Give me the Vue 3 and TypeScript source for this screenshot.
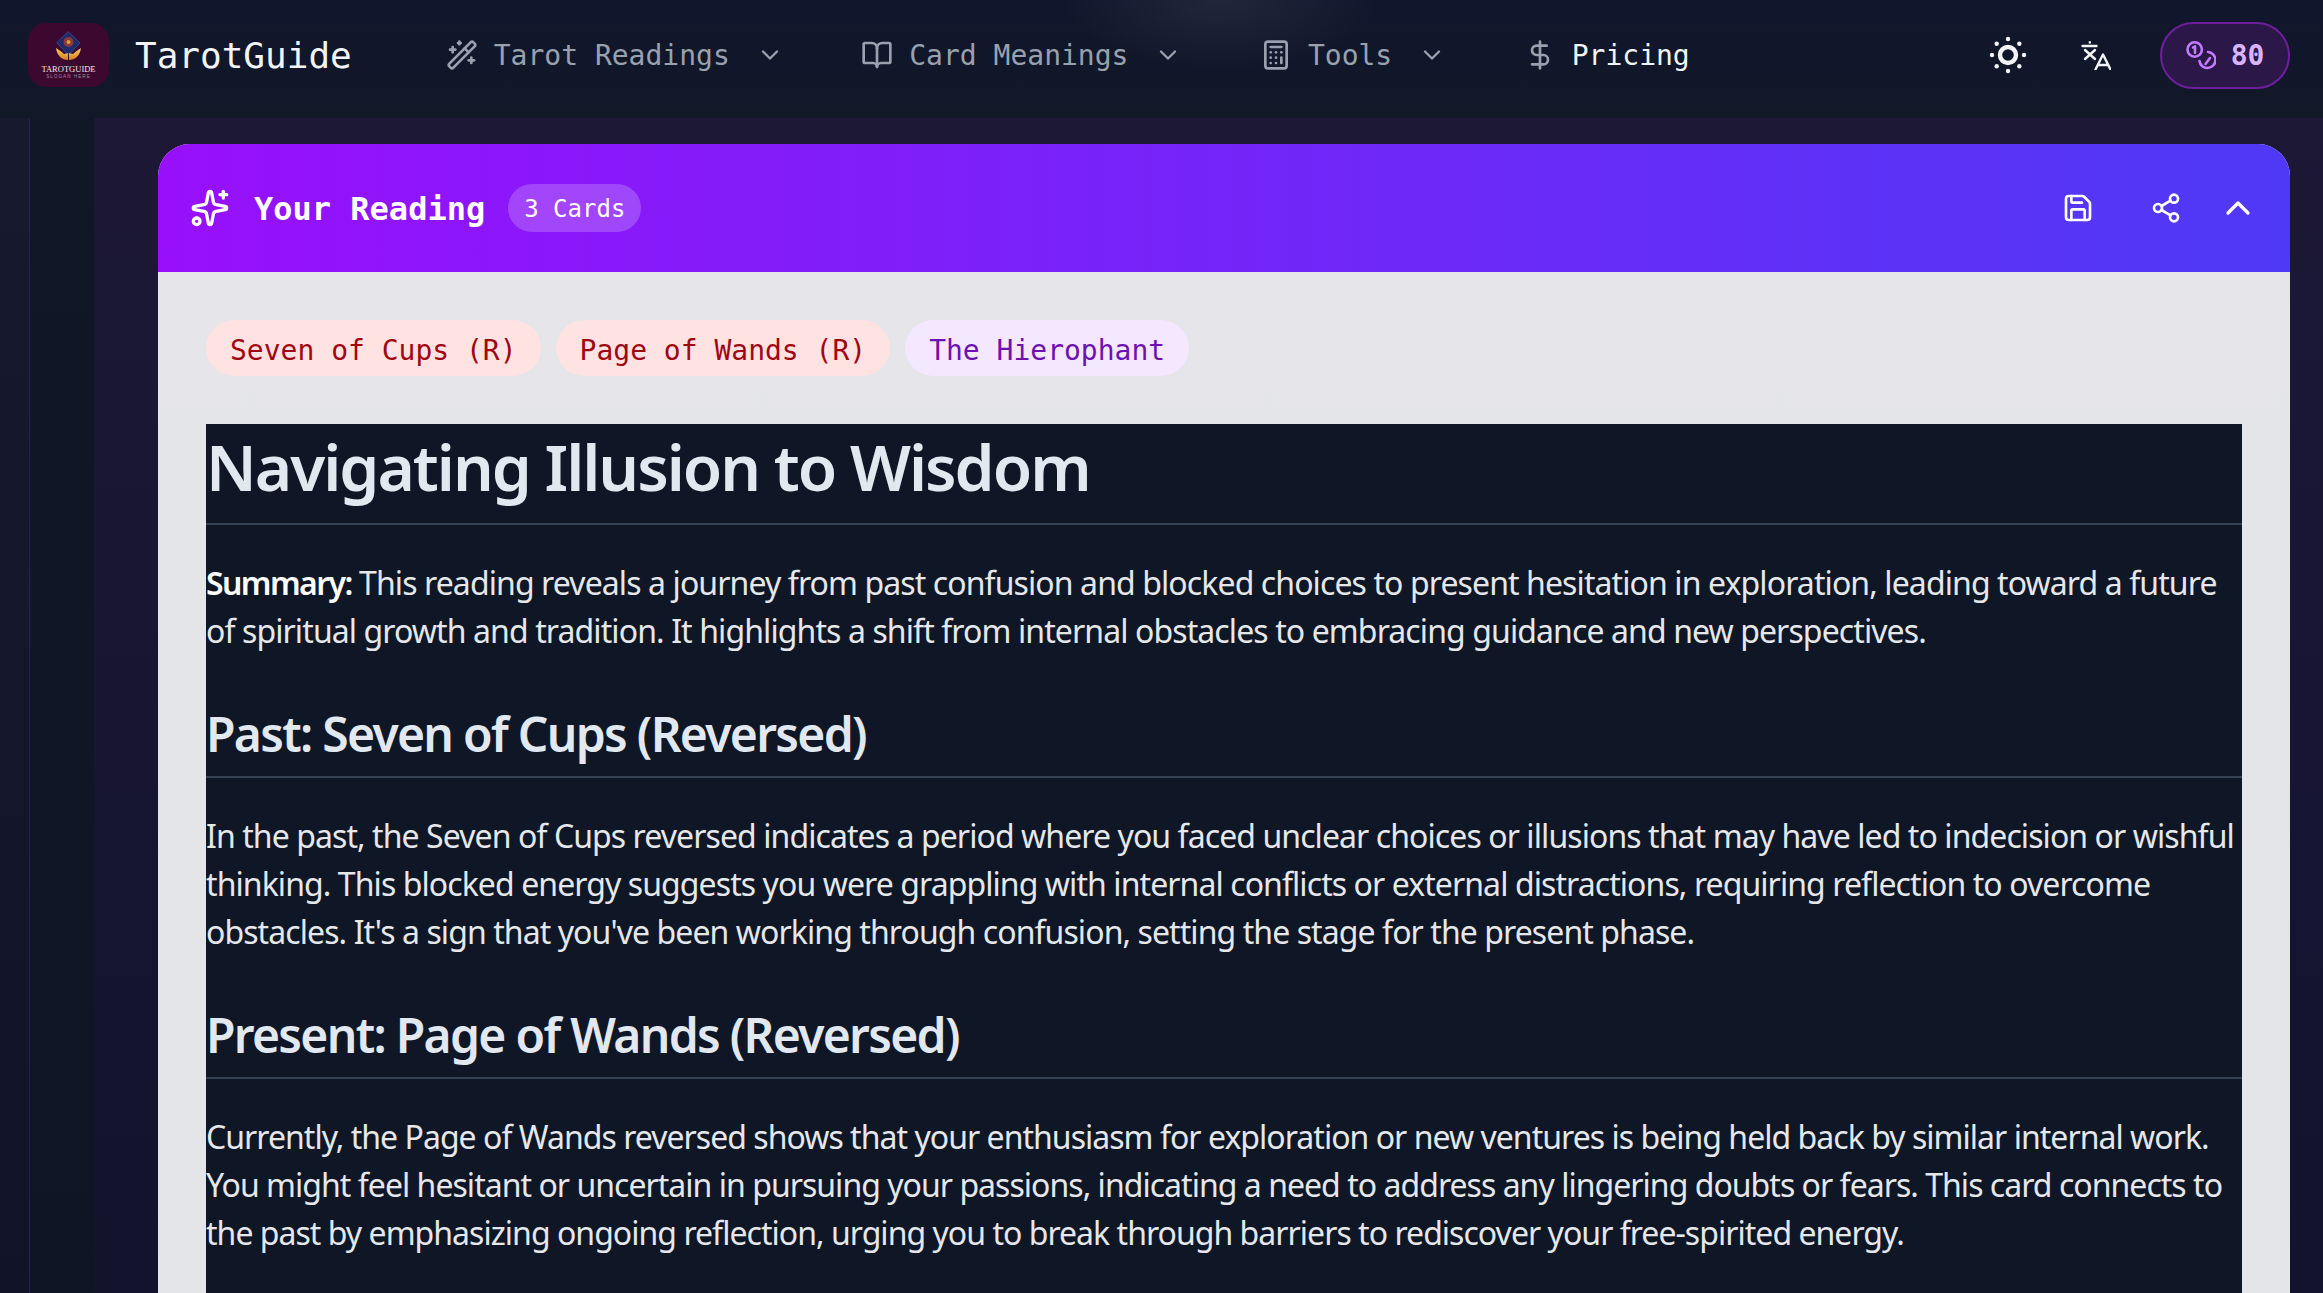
<template>
  <div class="page">
    <header class="topbar">
      <div class="logo">
        <svg viewBox="0 0 81 64" width="81" height="64">
          <defs>
            <linearGradient id="gold" x1="0" y1="0" x2="0" y2="1">
              <stop offset="0" stop-color="#f4d060" />
              <stop offset="1" stop-color="#dd7a20" />
            </linearGradient>
          </defs>
          <path d="M40.500 9 L52 20 L40.500 32 L29 20 Z" fill="#1f2a6b" stroke="#34489a" stroke-width="1" />
          <circle cx="40.500" cy="19" r="5" fill="#8a3a3a" />
          <circle cx="40.500" cy="19" r="2" fill="#e89a3c" />
          <path d="M28 25 C31 27 34 29 36 31 L40 30 L40 37 C34 37 29 33 28 25 Z" fill="url(#gold)" />
          <path d="M53 25 C50 27 47 29 45 31 L41 30 L41 37 C47 37 52 33 53 25 Z" fill="url(#gold)" />
          <text x="40.500" y="49" text-anchor="middle" class="logo-name">TAROTGUIDE</text>
          <text x="40.500" y="55" text-anchor="middle" class="logo-slogan">SLOGAN HERE</text>
        </svg>
      </div>
      <span class="brand">TarotGuide</span>
      <nav class="menu">
        <a class="menu-item">
          <svg class="ico" viewBox="0 0 24 24"><path d="m21.64 3.64-1.28-1.28a1.21 1.21 0 0 0-1.72 0L2.36 18.64a1.21 1.21 0 0 0 0 1.72l1.28 1.28a1.2 1.2 0 0 0 1.72 0L21.64 5.36a1.2 1.2 0 0 0 0-1.72" /><path d="m14 7 3 3" /><path d="M5 6v4" /><path d="M19 14v4" /><path d="M10 2v2" /><path d="M7 8H3" /><path d="M21 16h-4" /><path d="M11 3H9" /></svg>
          <span>Tarot Readings</span>
          <svg class="chev" viewBox="0 0 24 24"><path d="m6 9 6 6 6-6" /></svg>
        </a>
        <a class="menu-item">
          <svg class="ico" viewBox="0 0 24 24"><path d="M12 7v14" /><path d="M3 18a1 1 0 0 1-1-1V4a1 1 0 0 1 1-1h5a4 4 0 0 1 4 4 4 4 0 0 1 4-4h5a1 1 0 0 1 1 1v13a1 1 0 0 1-1 1h-6a3 3 0 0 0-3 3 3 3 0 0 0-3-3z" /></svg>
          <span>Card Meanings</span>
          <svg class="chev" viewBox="0 0 24 24"><path d="m6 9 6 6 6-6" /></svg>
        </a>
        <a class="menu-item">
          <svg class="ico" viewBox="0 0 24 24"><rect x="4" y="2" width="16" height="20" rx="2" /><line x1="8" x2="16" y1="6" y2="6" /><line x1="16" x2="16" y1="14" y2="18" /><path d="M16 10h.01" /><path d="M12 10h.01" /><path d="M8 10h.01" /><path d="M12 14h.01" /><path d="M8 14h.01" /><path d="M12 18h.01" /><path d="M8 18h.01" /></svg>
          <span>Tools</span>
          <svg class="chev" viewBox="0 0 24 24"><path d="m6 9 6 6 6-6" /></svg>
        </a>
        <a class="menu-item pricing">
          <svg class="ico" viewBox="0 0 24 24"><line x1="12" x2="12" y1="2" y2="22" /><path d="M17 5H9.5a3.5 3.5 0 0 0 0 7h5a3.5 3.5 0 0 1 0 7H6" /></svg>
          <span>Pricing</span>
        </a>
      </nav>
      <div class="top-actions">
        <svg class="action-ico" viewBox="0 0 24 24"><circle cx="12" cy="12" r="4" /><path d="M12 4h.01" /><path d="M20 12h.01" /><path d="M12 20h.01" /><path d="M4 12h.01" /><path d="M17.657 6.343h.01" /><path d="M17.657 17.657h.01" /><path d="M6.343 17.657h.01" /><path d="M6.343 6.343h.01" /></svg>
        <svg class="lang-ico" viewBox="0 0 30 30"><path d="M1.500 6h14" /><path d="M8.800 2.200v.4" /><path d="m4 10 10 9" /><path d="m14 10-10 9" /><path d="m14.500 29.500 7.500-15 7.500 15" /><path d="M17 25h10" /></svg>
        <div class="credits">
          <svg class="coin-ico" viewBox="0 0 30 30"><circle cx="8.700" cy="9.500" r="7.200" /><path d="M7 7.500l2-1.200v6.500" /><path d="M22 12a8 8 0 1 1-8.500 9" /><path d="M24 18l-4.500 6" /></svg>
          <span>80</span>
        </div>
      </div>
    </header>

    <div class="below">
      <div class="strip-a"></div>
      <div class="strip-b"></div>
      <main class="content">
        <section class="card">
          <div class="card-head">
            <svg class="spark" viewBox="0 0 24 24"><path d="M11.017 2.814a1 1 0 0 1 1.966 0l1.051 5.558a2 2 0 0 0 1.594 1.594l5.558 1.051a1 1 0 0 1 0 1.966l-5.558 1.051a2 2 0 0 0-1.594 1.594l-1.051 5.558a1 1 0 0 1-1.966 0l-1.051-5.558a2 2 0 0 0-1.594-1.594l-5.558-1.051a1 1 0 0 1 0-1.966l5.558-1.051a2 2 0 0 0 1.594-1.594z" /><path d="M20 2v4" /><path d="M22 4h-4" /><circle cx="4" cy="20" r="2" /></svg>
            <h2 class="card-title">Your Reading</h2>
            <span class="count">3 Cards</span>
            <div class="head-actions">
              <svg class="head-ico" viewBox="0 0 24 24"><path d="M15.2 3a2 2 0 0 1 1.400.6l3.800 3.800a2 2 0 0 1 .6 1.400V19a2 2 0 0 1-2 2H5a2 2 0 0 1-2-2V5a2 2 0 0 1 2-2z" /><path d="M17 21v-7a1 1 0 0 0-1-1H8a1 1 0 0 0-1 1v7" /><path d="M7 3v4a1 1 0 0 0 1 1h7" /></svg>
              <svg class="head-ico" viewBox="0 0 24 24"><circle cx="18" cy="5" r="3" /><circle cx="6" cy="12" r="3" /><circle cx="18" cy="19" r="3" /><line x1="8.590" x2="15.420" y1="13.510" y2="17.490" /><line x1="15.410" x2="8.590" y1="6.510" y2="10.490" /></svg>
              <svg class="head-ico up" viewBox="0 0 24 24"><path d="m18 15-6-6-6 6" /></svg>
            </div>
          </div>
          <div class="card-body">
            <div class="chips">
              <span v-for="c in cards" :key="c.name" class="chip" :class="{ reversed: c.reversed }">{{ c.name }}</span>
            </div>
            <article class="markdown">
              <h1>Navigating Illusion to Wisdom</h1>
              <p class="summary"><strong>Summary:</strong> This reading reveals a journey from past confusion and blocked choices to present hesitation in exploration, leading toward a future of spiritual growth and tradition. It highlights a shift from internal obstacles to embracing guidance and new perspectives.</p>
              <h2>Past: Seven of Cups (Reversed)</h2>
              <p class="past">In the past, the Seven of Cups reversed indicates a period where you faced unclear choices or illusions that may have led to indecision or wishful thinking. This blocked energy suggests you were grappling with internal conflicts or external distractions, requiring reflection to overcome obstacles. It's a sign that you've been working through confusion, setting the stage for the present phase.</p>
              <h2>Present: Page of Wands (Reversed)</h2>
              <p class="present">Currently, the Page of Wands reversed shows that your enthusiasm for exploration or new ventures is being held back by similar internal work. You might feel hesitant or uncertain in pursuing your passions, indicating a need to address any lingering doubts or fears. This card connects to the past by emphasizing ongoing reflection, urging you to break through barriers to rediscover your free-spirited energy.</p>
            </article>
          </div>
        </section>
      </main>
    </div>
  </div>
</template>

<script setup lang="ts">
interface DrawnCard {
  name: string
  reversed: boolean
}

const cards: DrawnCard[] = [
  { name: 'Seven of Cups (R)', reversed: true },
  { name: 'Page of Wands (R)', reversed: true },
  { name: 'The Hierophant', reversed: false }
]
</script>

<style>
html, body {
  margin: 0;
  height: 1293px;
  overflow: hidden;
  background: #1c1836;
}
</style>

<style scoped>
.page {
  height: 1293px;
  overflow: hidden;
  display: flex;
  flex-direction: column;
  font-family: "DejaVu Sans Mono", monospace;
}

svg {
  fill: none;
  stroke: currentColor;
  stroke-linecap: round;
  stroke-linejoin: round;
  stroke-width: 2;
  flex: none;
}

.topbar {
  height: 118px;
  flex: none;
  display: flex;
  align-items: center;
  padding: 0 33px 8px 28px;
  box-sizing: border-box;
  background:
    radial-gradient(ellipse 160px 70px at 1220px 0, rgba(255, 255, 255, 0.07), transparent),
    linear-gradient(180deg, #11162d 0%, #111827 100%);
}

.logo {
  width: 81px;
  height: 64px;
  border-radius: 18px;
  background: #3d0830;
  display: flex;
  align-items: center;
  justify-content: center;
}

.logo svg {
  stroke: none;
}

.logo-name {
  font-family: "Liberation Serif", serif;
  font-size: 8.500px;
  fill: #f3e6e6;
}

.logo-slogan {
  font-family: "Liberation Sans", sans-serif;
  font-size: 4.500px;
  letter-spacing: 1.100px;
  fill: #a88aa0;
}

.brand {
  margin-left: 26px;
  font-size: 36px;
  color: #f3f4f6;
}

.menu {
  margin-left: 94px;
  display: flex;
  align-items: center;
  gap: 77.500px;
}

.menu-item {
  display: flex;
  align-items: center;
  font-size: 28px;
  color: #99a1af;
}

.menu-item.pricing {
  color: #f3f4f6;
}

.menu-item.pricing .ico {
  color: #99a1af;
}

.ico {
  width: 32px;
  height: 32px;
  margin-right: 16px;
}

.chev {
  width: 28px;
  height: 28px;
  margin-left: 26px;
}

.top-actions {
  margin-left: auto;
  display: flex;
  align-items: center;
  color: #f3f4f6;
}

.action-ico {
  width: 48px;
  height: 48px;
  stroke-width: 2.200;
}

.lang-ico {
  width: 30px;
  height: 30px;
  margin-left: 49px;
  stroke-width: 2.400;
}

.credits {
  margin-left: 49px;
  width: 130px;
  height: 67px;
  box-sizing: border-box;
  border: 2px solid #6e1f9e;
  border-radius: 34px;
  background: #2b1748;
  display: flex;
  align-items: center;
  justify-content: center;
  gap: 15px;
  color: #d8b4fe;
  font-size: 28px;
  font-weight: 700;
}

.coin-ico {
  width: 30px;
  height: 30px;
  color: #c27aff;
  stroke-width: 2.600;
}

.below {
  flex: 1;
  display: flex;
  min-height: 0;
}

.strip-a {
  width: 29px;
  flex: none;
  background: linear-gradient(180deg, #171a2e, #111428);
  border-right: 1px solid #2a2050;
}

.strip-b {
  width: 64px;
  flex: none;
  background: linear-gradient(180deg, #101828, #0e1626);
}

.content {
  flex: 1;
  min-width: 0;
  background: linear-gradient(180deg, #1c1836, #13132e);
  padding: 26px 33px 0 64px;
}

.card {
  border-radius: 32px 32px 0 0;
  overflow: hidden;
  background: linear-gradient(180deg, #e5e5ea, #e3e5e8);
}

.card-head {
  height: 128px;
  padding: 0 32px;
  box-sizing: border-box;
  display: flex;
  align-items: center;
  color: #fff;
  background: linear-gradient(90deg, #9810fa, #4f39f6);
}

.spark {
  width: 40px;
  height: 40px;
}

.card-title {
  margin: 2px 0 0 24px;
  font-size: 32px;
  font-weight: 700;
}

.count {
  margin-left: 23px;
  padding: 9px 16px 7px;
  line-height: 32px;
  border-radius: 24px;
  font-size: 24px;
  background: rgba(255, 255, 255, 0.2);
}

.head-actions {
  margin-left: auto;
  display: flex;
  align-items: center;
}

.head-ico {
  width: 32px;
  height: 32px;
  margin-left: 56px;
}

.head-ico.up {
  width: 40px;
  height: 40px;
  margin-left: 36px;
}

.card-body {
  padding: 48px 48px 0;
}

.chips {
  display: flex;
  gap: 15px;
  margin-bottom: 48px;
}

.chip {
  padding: 11px 24px 5px;
  line-height: 40px;
  border-radius: 28px;
  font-size: 28px;
  background: #f3e8ff;
  color: #6e11b0;
}

.chip.reversed {
  background: #ffe2e2;
  color: #9f0712;
}

.markdown {
  padding-bottom: 80px;
  background: #0f1726;
  color: #e5e7eb;
  font-family: "Noto Sans", sans-serif;
  font-size: 32px;
  line-height: 48px;
}

.markdown h1,
.markdown h2 {
  color: #e2e8f0;
  font-weight: 600;
  border-bottom: 2px solid #364153;
  line-height: 1.25;
}

.markdown h1 {
  margin: 0 0 32px;
  font-size: 64px;
  padding: 3px 0 16px;
  letter-spacing: -2px;
}

.markdown h2 {
  margin: 48px 0 32px;
  font-size: 48px;
  padding: 1px 0 12px;
  letter-spacing: -1.7px;
}

.markdown p {
  margin: 0 0 30px;
  padding-top: 2px;
}

.markdown .summary {
  letter-spacing: -0.9px;
}

.markdown .past {
  letter-spacing: -0.92px;
}

.markdown .present {
  letter-spacing: -0.97px;
}

.markdown strong {
  font-weight: 600;
  color: #fff;
  letter-spacing: -1.6px;
}
</style>
